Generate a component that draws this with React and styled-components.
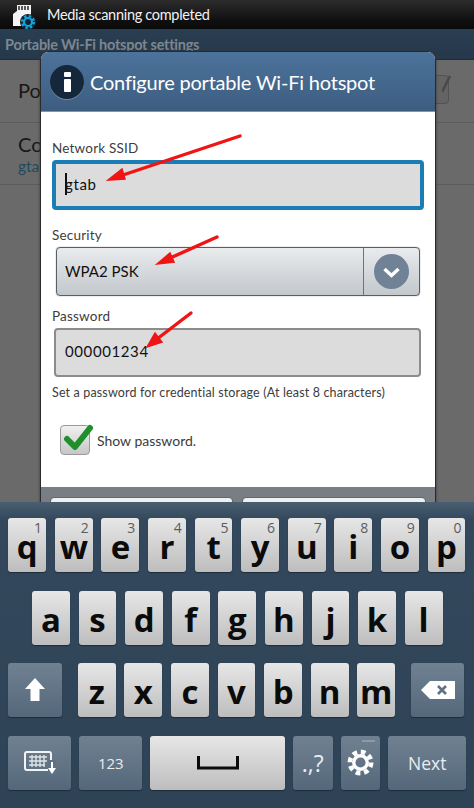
import React from "react";
import styled, { createGlobalStyle } from "styled-components";

const Global = createGlobalStyle`
  html, body { margin: 0; padding: 0; background: #6a6a6a; overflow: hidden; }
  * { box-sizing: border-box; }
`;

const hand = `"Lato", "Noto Sans", sans-serif`;
const keyFont = `"Open Sans", "Noto Sans", sans-serif`;

const Screen = styled.div`
  position: relative; width: 474px; height: 808px; overflow: hidden;
  background: #6a6a6a; font-family: ${hand};
`;
const StatusBar = styled.div`
  height: 29px; display: flex; align-items: center; gap: 11px; padding-left: 12px;
  background: linear-gradient(#2c2c2c, #101010 70%, #0a0a0a);
  color: #f2f2f2; font-size: 14.5px; letter-spacing: -.3px;
`;
const ActionBar = styled.div`
  height: 31px; padding: 0 0 0 5px; display: flex; align-items: center;
  background: linear-gradient(#2a3e52, #26384b);
  color: #7d8791; font-size: 14.5px; font-weight: 700; letter-spacing: -.25px; border-bottom: 1px solid #1f2d3b;
`;
const BgRow = styled.div`
  height: ${p => p.$h}px; padding: 0 25px ${p => p.$pb || 0}px 18px; display: flex; align-items: center; justify-content: space-between;
  border-bottom: 1px solid #5c5c5c; color: #171717; font-size: 20px;
`;
const BgSub = styled.div`color: #1f4a5e; font-size: 15.5px; margin-top: 1px;`;
const BgCheck = styled.div`
  position: relative; width: 30px; height: 29px; border: 1px solid #525252; border-radius: 4px; background: #646464;
`;
const BgTick = styled.svg`position: absolute; right: -4px; top: -2px;`;
const Dialog = styled.div`
  position: absolute; left: 40px; top: 51px; width: 396px; height: 520px;
  border: 1px solid #2a2a2a; border-bottom: 0; border-radius: 8px 8px 0 0; overflow: hidden;
  display: flex; flex-direction: column; background: #fff;
  box-shadow: 0 0 3px #3a3a3a;
`;
const Header = styled.div`
  height: 60px; flex: none; padding-left: 9px; display: flex; align-items: center; gap: 6px;
  background: linear-gradient(#4c739c, #3d5d7f); border-bottom: 1px solid #7f96ad;
  color: #fff; font-size: 20px; letter-spacing: -.2px;
`;
const InfoCircle = styled.div`
  width: 34px; height: 34px; border-radius: 50%; background: #15273b; flex: none;
  display: flex; flex-direction: column; align-items: center; justify-content: center; gap: 2px;
  box-shadow: 0 1px 0 #6f8aa6;
`;
const InfoDot = styled.span`width: 7px; height: 5px; background: #fff; border-radius: 1px;`;
const InfoBar = styled.span`width: 7px; height: 13px; background: #fff; border-radius: 1px;`;
const Body = styled.div`
  height: 375px; flex: none; padding: 27px 0 0 11px; display: flex; flex-direction: column;
`;
const Label = styled.div`
  height: 18px; line-height: 18px; font-size: 13.5px; color: #3d3d3d; letter-spacing: .2px;
  margin-top: ${p => p.$mt || 0}px;
`;
const Field = styled.div`
  height: ${p => p.$h}px; width: ${p => p.$w}px; margin-left: ${p => p.$ml || 0}px; margin-top: ${p => p.$mt || 0}px;
  border: ${p => p.$focus ? "4px solid #1a7db6" : "2px solid #8c8c8c"};
  border-radius: 4px; background: #dcdcdc; color: #111;
  padding: 0 0 ${p => p.$focus ? 2 : 3}px 9px; display: flex; align-items: center;
  font-size: 15px; letter-spacing: .6px;
`;
const CaretText = styled.span`
  position: relative;
  &::before { content: ""; position: absolute; left: 0; top: -2px; height: 22px; width: 1.5px; background: #111; }
`;
const Select = styled.div`
  height: 49px; width: 364px; margin: 3px 0 0 4px; border: 1px solid #565e66; border-radius: 4px;
  display: flex; background: linear-gradient(#e9ebed, #c3c8cc); color: #111; box-shadow: 0 0 1px #555;
`;
const SelectValue = styled.div`
  flex: 1; padding-left: 8px; display: flex; align-items: center; font-size: 15px;
  border-right: 1px solid #6c747b; padding-bottom: 2px;
`;
const SelectBtn = styled.div`width: 55px; display: flex; align-items: center; justify-content: center;`;
const Helper = styled.div`
  margin-top: 8px; font-size: 12.5px; color: #3c3c3c; height: 16px; line-height: 16px; letter-spacing: .15px;
`;
const CheckRow = styled.div`
  margin: 24px 0 0 8px; display: flex; align-items: center; gap: 7px; color: #3b3b3b; font-size: 14px;
`;
const CheckBox = styled.div`
  position: relative; width: 30px; height: 30px; border: 1px solid #9a9a9a; border-radius: 4px;
  background: linear-gradient(#f0f0f0, #c6c6c6);
`;
const CheckMark = styled.svg`position: absolute; left: 1px; top: -3px;`;
const Footer = styled.div`
  flex: none; height: 90px; background: #797e84; padding: 10px 9px 0; display: flex; gap: 9px;
`;
const FootBtn = styled.div`
  height: 50px; flex: ${p => p.$flex}; border-radius: 4px 4px 0 0; background: linear-gradient(#f0f2f4, #c8ccd0); border: 1px solid #666;
`;
const Arrows = styled.svg`position: absolute; left: 0; top: 0;`;
const Keyboard = styled.div`
  position: absolute; left: 0; right: 0; bottom: 0; height: 306px;
  padding: 16px 8.3px 0; display: flex; flex-direction: column; gap: 18.6px;
  background: linear-gradient(#4a5e71 0, #33485c 18px, #2f4357 100%);
`;
const KeyRow = styled.div`
  display: flex; height: 54px; gap: ${p => p.$gap ?? 8.8}px; padding-left: ${p => p.$pl || 0}px;
`;
const KeyGroup = styled.div`display: flex; gap: 8.8px;`;
const Key = styled.div`
  position: relative; flex: none; width: ${p => p.$w || 37.8}px; height: 54px; border-radius: 3px;
  display: flex; align-items: center; justify-content: center;
  font-family: ${keyFont}; font-weight: 700; font-size: 33px; color: #0b0b0b;
  padding-top: ${p => p.$pt ?? 3}px;
  background: linear-gradient(#e7e7e7, #bdbdbd);
  box-shadow: 0 1px 1px #1e2c3a;
`;
const FnKey = styled(Key)`
  background: linear-gradient(#6f8191, #55687b);
  color: #e9edf0; font-weight: 400; font-size: ${p => p.$fs || 20}px; padding-top: ${p => p.$pt ?? 0}px;
`;
const Hint = styled.span`
  position: absolute; right: 4px; top: 1px; font-size: 14px; font-weight: 400; color: #5c5c5c; line-height: 18px;
`;
const GearDash = styled.span`
  position: absolute; right: 5px; top: 4px; width: 13px; height: 2px; background: #8c9aa8;
`;
const StatusGlyph = styled.svg`flex: none;`;

const row1 = [["q",1],["w",2],["e",3],["r",4],["t",5],["y",6],["u",7],["i",8],["o",9],["p",0]];

const Gear = ({ size, color, hole }) => (
  <svg width={size} height={size} viewBox="0 0 32 32">
    <circle cx="16" cy="16" r="12.6" fill="none" stroke={color} strokeWidth="5.6" strokeDasharray="5.5 4.4" />
    <circle cx="16" cy="16" r="8" fill="none" stroke={color} strokeWidth={hole} />
  </svg>
);

const StatusIcon = () => (
  <StatusGlyph width="24" height="28" viewBox="0 0 24 28">
    <path d="M5 4h14v8h0v13H1V13l4-3z" fill="#f4f4f4" />
    <path d="M7 5v4M10 5v4M13 5v4M16 5v4" stroke="#333" strokeWidth="1.6" />
    <circle cx="16" cy="21" r="8" fill="#10222f" />
    <circle cx="16" cy="21" r="4" fill="none" stroke="#12a3d8" strokeWidth="2.2" />
    <circle cx="16" cy="21" r="5.8" fill="none" stroke="#12a3d8" strokeWidth="2.6" strokeDasharray="2.4 2.15" />
  </StatusGlyph>
);

const KeyboardIcon = () => (
  <svg width="32" height="24" viewBox="0 0 32 24">
    <rect x="1" y="1" width="26" height="18" rx="2" fill="none" stroke="#f1f3f5" strokeWidth="2" />
    <path d="M5 6h18M5 10h18M5 14h16M8 4v12M12 4v12M16 4v12M20 4v12" stroke="#dfe3e7" strokeWidth="1.4" />
    <rect x="24" y="9" width="8" height="15" fill="#5f7285" />
    <path d="M27 11h2v6h3l-4 6-4-6h3z" fill="#fff" />
  </svg>
);

export default function App() {
  return (
    <Screen>
      <Global />
      <StatusBar><StatusIcon />Media scanning completed</StatusBar>
      <ActionBar>Portable Wi-Fi hotspot settings</ActionBar>
      <BgRow $h={63} $pb={3}>
        <span>Portable Wi-Fi hotspot</span>
        <BgCheck>
          <BgTick width="10" height="20" viewBox="0 0 10 20">
            <path d="M0 18L8 2" stroke="#4a4a4a" strokeWidth="2.5" />
          </BgTick>
        </BgCheck>
      </BgRow>
      <BgRow $h={62}>
        <div>
          <div>Configure</div>
          <BgSub>gtab</BgSub>
        </div>
      </BgRow>

      <Dialog>
        <Header>
          <InfoCircle><InfoDot /><InfoBar /></InfoCircle>
          Configure portable Wi-Fi hotspot
        </Header>
        <Body>
          <Label>Network SSID</Label>
          <Field $focus $w={372} $h={50} $mt={3}><CaretText>gtab</CaretText></Field>
          <Label $mt={16}>Security</Label>
          <Select>
            <SelectValue>WPA2 PSK</SelectValue>
            <SelectBtn>
              <svg width="35" height="35" viewBox="0 0 35 35">
                <circle cx="17.5" cy="17.5" r="17.5" fill="#6f8296" />
                <path d="M10.5 15l7 6.5 7-6.5" fill="none" stroke="#fff" strokeWidth="3.4" />
              </svg>
            </SelectBtn>
          </Select>
          <Label $mt={11}>Password</Label>
          <Field $w={367} $h={49} $ml={2} $mt={3}>000001234</Field>
          <Helper>Set a password for credential storage (At least 8 characters)</Helper>
          <CheckRow>
            <CheckBox>
              <CheckMark width="32" height="30" viewBox="0 0 32 30">
                <path d="M5 16l8 8L28 5" fill="none" stroke="#1f8f2b" strokeWidth="6" strokeLinecap="round" strokeLinejoin="round" />
              </CheckMark>
            </CheckBox>
            Show password.
          </CheckRow>
        </Body>
        <Footer><FootBtn $flex={183} /><FootBtn $flex={184} /></Footer>
      </Dialog>

      <Arrows width="474" height="808" viewBox="0 0 474 808">
        <g fill="#f01414" stroke="#f01414" strokeLinecap="round">
          <path d="M240 136L120 176" strokeWidth="3.4" />
          <path d="M108 180L122 169L125 179z" strokeWidth="1.5" />
          <path d="M217 237L168 259" strokeWidth="3.4" />
          <path d="M157 264L170 253L174 262z" strokeWidth="1.5" />
          <path d="M191 313L157 339" strokeWidth="3.4" />
          <path d="M147 347L155 333L162 342z" strokeWidth="1.5" />
        </g>
      </Arrows>

      <Keyboard>
        <KeyRow>
          {row1.map(([l, n]) => <Key key={l}><Hint>{n}</Hint>{l}</Key>)}
        </KeyRow>
        <KeyRow $pl={23.7}>
          {"asdfghjkl".split("").map(l => <Key key={l}>{l}</Key>)}
        </KeyRow>
        <KeyRow $gap={16}>
          <FnKey $w={53.5}>
            <svg width="20" height="24" viewBox="0 0 20 24"><path d="M10 0l10 11h-5.5v12h-9V11H0z" fill="#fff" /></svg>
          </FnKey>
          <KeyGroup>
            {"zxcvbnm".split("").map(l => <Key key={l}>{l}</Key>)}
          </KeyGroup>
          <FnKey $w={53}>
            <svg width="34" height="18" viewBox="0 0 34 18">
              <path d="M9 0h25v18H9L0 9z" fill="#fff" />
              <path d="M17 5l8 8M25 5l-8 8" stroke="#5f7285" strokeWidth="2.6" />
            </svg>
          </FnKey>
        </KeyRow>
        <KeyRow $gap={8}>
          <FnKey $w={63}><KeyboardIcon /></FnKey>
          <FnKey $w={63} $fs={15}>123</FnKey>
          <Key $w={134.5} $pt={0}>
            <svg width="42" height="14" viewBox="0 0 42 14"><path d="M1.5 0v12h39V0" fill="none" stroke="#0b0b0b" strokeWidth="3" /></svg>
          </Key>
          <FnKey $w={40} $fs={23} $pt={0}>.,?</FnKey>
          <FnKey $w={39.5}>
            <GearDash />
            <Gear size={27} color="#fff" hole={4} />
          </FnKey>
          <FnKey $w={78} $fs={17.5}>Next</FnKey>
        </KeyRow>
      </Keyboard>
    </Screen>
  );
}
